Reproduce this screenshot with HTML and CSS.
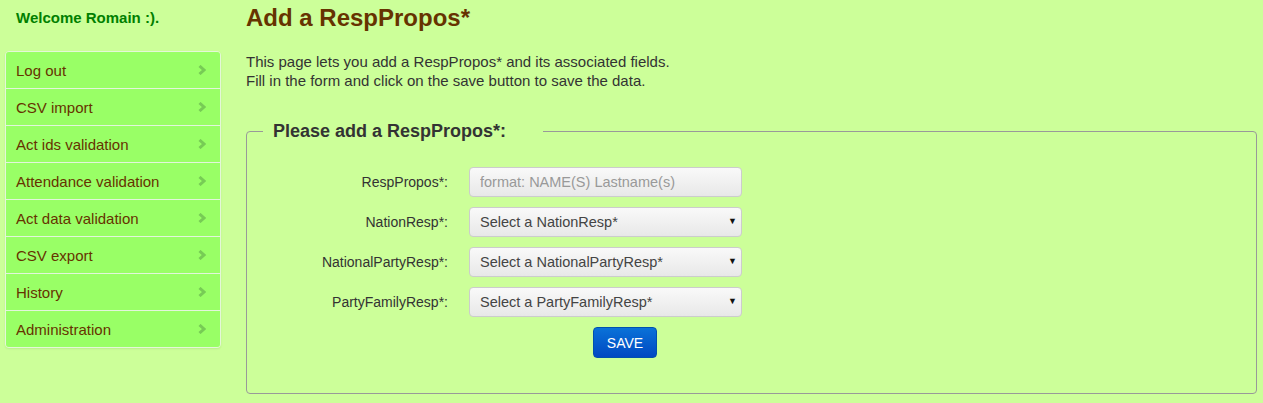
FILE: index.html
```html
<!DOCTYPE html>
<html>
<head>
<meta charset="utf-8">
<link rel="stylesheet" href="styles.css">
</head>
<body>
<div class="page">
  <aside class="sidebar">
    <div class="welcome">Welcome Romain :).</div>
    <ul class="menu">
      <li><span>Log out</span><svg class="chev" width="9" height="10" viewBox="0 0 9 10"><polyline points="1.5,1 6,5 1.5,9" fill="none" stroke="#77cc55" stroke-width="3"/></svg></li>
      <li><span>CSV import</span><svg class="chev" width="9" height="10" viewBox="0 0 9 10"><polyline points="1.5,1 6,5 1.5,9" fill="none" stroke="#77cc55" stroke-width="3"/></svg></li>
      <li><span>Act ids validation</span><svg class="chev" width="9" height="10" viewBox="0 0 9 10"><polyline points="1.5,1 6,5 1.5,9" fill="none" stroke="#77cc55" stroke-width="3"/></svg></li>
      <li><span>Attendance validation</span><svg class="chev" width="9" height="10" viewBox="0 0 9 10"><polyline points="1.5,1 6,5 1.5,9" fill="none" stroke="#77cc55" stroke-width="3"/></svg></li>
      <li><span>Act data validation</span><svg class="chev" width="9" height="10" viewBox="0 0 9 10"><polyline points="1.5,1 6,5 1.5,9" fill="none" stroke="#77cc55" stroke-width="3"/></svg></li>
      <li><span>CSV export</span><svg class="chev" width="9" height="10" viewBox="0 0 9 10"><polyline points="1.5,1 6,5 1.5,9" fill="none" stroke="#77cc55" stroke-width="3"/></svg></li>
      <li><span>History</span><svg class="chev" width="9" height="10" viewBox="0 0 9 10"><polyline points="1.5,1 6,5 1.5,9" fill="none" stroke="#77cc55" stroke-width="3"/></svg></li>
      <li><span>Administration</span><svg class="chev" width="9" height="10" viewBox="0 0 9 10"><polyline points="1.5,1 6,5 1.5,9" fill="none" stroke="#77cc55" stroke-width="3"/></svg></li>
    </ul>
  </aside>
  <main class="main">
    <h1 class="title">Add a RespPropos*</h1>
    <p class="intro">This page lets you add a RespPropos* and its associated fields.<br>Fill in the form and click on the save button to save the data.</p>
    <fieldset class="box">
      <legend class="legend">Please add a RespPropos*:</legend>
      <div class="row">
        <label class="lbl">RespPropos*:</label>
        <input class="field" type="text" placeholder="format: NAME(S) Lastname(s)">
      </div>
      <div class="row">
        <label class="lbl">NationResp*:</label>
        <div class="selwrap"><select class="field sel"><option>Select a NationResp*</option></select><span class="arrow">▼</span></div>
      </div>
      <div class="row">
        <label class="lbl">NationalPartyResp*:</label>
        <div class="selwrap"><select class="field sel"><option>Select a NationalPartyResp*</option></select><span class="arrow">▼</span></div>
      </div>
      <div class="row">
        <label class="lbl">PartyFamilyResp*:</label>
        <div class="selwrap"><select class="field sel"><option>Select a PartyFamilyResp*</option></select><span class="arrow">▼</span></div>
      </div>
      <div class="row">
        <span class="lbl"></span>
        <button class="save" type="button">SAVE</button>
      </div>
    </fieldset>
  </main>
</div>
</body>
</html>
```

FILE: styles.css
```css
html, body {
  margin: 0;
  padding: 0;
  background: #ccff99;
  font-family: "Liberation Sans", Arial, sans-serif;
}
.page {
  display: flex;
  align-items: flex-start;
}
.sidebar {
  width: 216px;
  margin-left: 5px;
  flex: none;
}
.welcome {
  color: #008000;
  font-weight: bold;
  font-size: 15px;
  padding: 9px 0 0 11px;
  height: 34px;
}
.menu {
  list-style: none;
  margin: 8px 0 0 0;
  padding: 0;
  border: 1px solid #e4f7d8;
  border-radius: 4px;
  overflow: hidden;
  box-shadow: 0 1px 2px rgba(0,0,0,0.08);
}
.menu li {
  background: #99ff66;
  color: #663300;
  font-size: 15px;
  height: 36px;
  display: flex;
  align-items: center;
  justify-content: space-between;
  padding: 0 13px 0 10px;
  border-top: 1px solid #e2f5dc;
}
.menu li:first-child {
  border-top: none;
}
.chev {
  display: block;
}
.main {
  flex: 1;
  margin-left: 25px;
  margin-right: 6px;
}
.title {
  margin: 4px 0 0 0;
  font-size: 24px;
  font-weight: bold;
  color: #663300;
  line-height: 28px;
}
.intro {
  margin: 20px 0 0 0;
  font-size: 15px;
  color: #333;
  line-height: 19px;
}
.box {
  margin: 31px 0 0 0;
  border: 1px solid #999;
  border-radius: 4px;
  padding: 25px 20px 25px 20px;
}
.legend {
  font-size: 18px;
  font-weight: bold;
  color: #333;
  padding: 0 37px 0 10px;
  margin-left: -4px;
}
.row {
  display: flex;
  align-items: center;
  margin-bottom: 10px;
}
.lbl {
  width: 181px;
  text-align: right;
  font-size: 14px;
  color: #333;
  margin-right: 21px;
  flex: none;
}
.field {
  box-sizing: border-box;
  width: 273px;
  height: 30px;
  border: 1px solid #ccc;
  border-radius: 4px;
  background: linear-gradient(#f9f9f9, #e8e8e8);
  font-family: "Liberation Sans", Arial, sans-serif;
  font-size: 14.5px;
  color: #444;
  padding: 0 10px;
  margin: 0;
}
.field::placeholder {
  color: #999;
}
.selwrap {
  position: relative;
  width: 273px;
  height: 30px;
}
.sel {
  -webkit-appearance: none;
  appearance: none;
  display: block;
}
.arrow {
  position: absolute;
  right: 5px;
  top: 9px;
  font-size: 9px;
  color: #111;
  pointer-events: none;
}
.save {
  margin-left: 124px;
  margin-top: 0;
  width: 64px;
  height: 31px;
  border: 1px solid #0050b0;
  border-radius: 4px;
  background: linear-gradient(#0a72d8, #0049c2);
  color: #fff;
  font-family: "Liberation Sans", Arial, sans-serif;
  font-size: 14px;
  padding: 0;
}
```
